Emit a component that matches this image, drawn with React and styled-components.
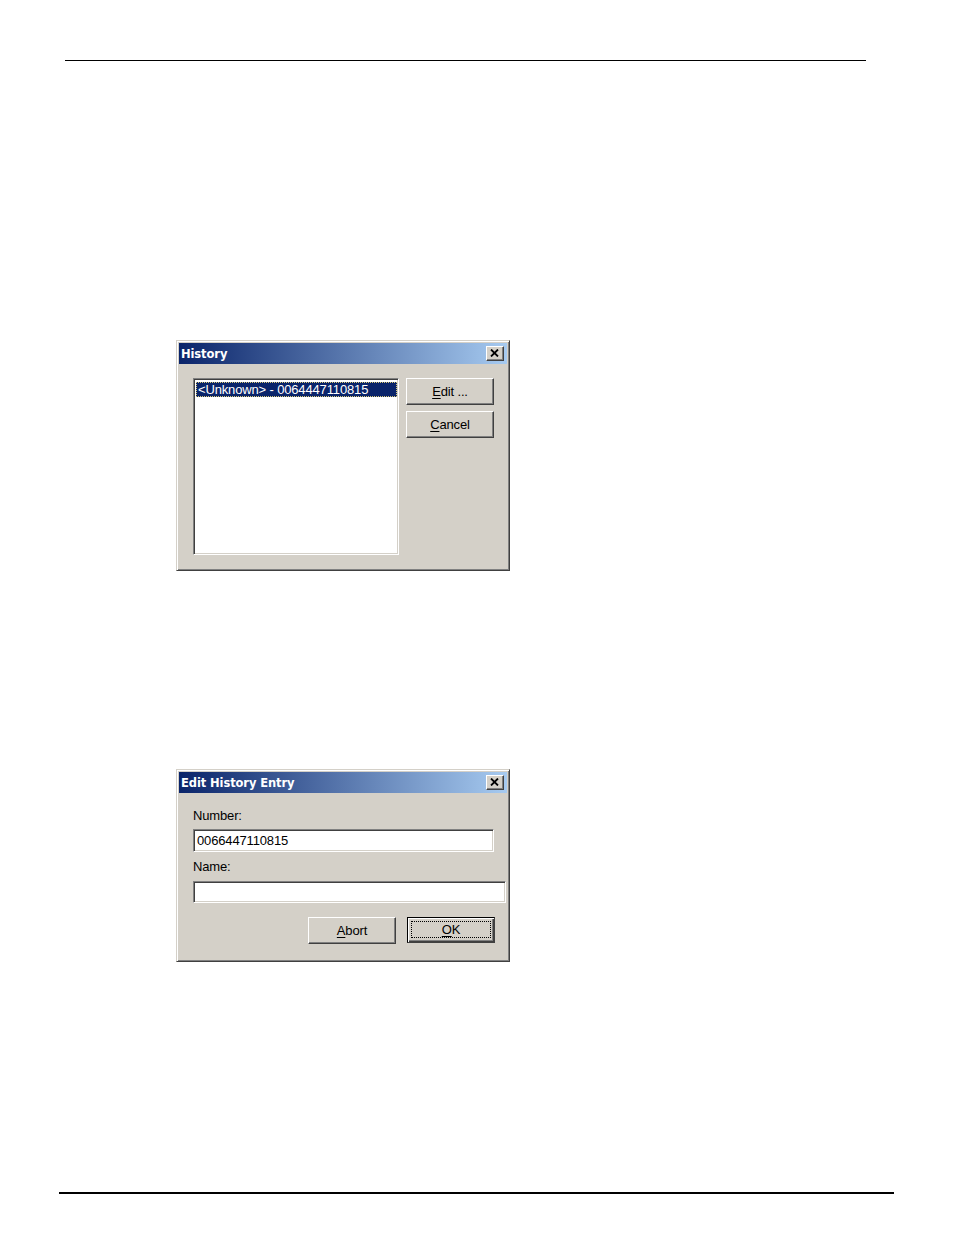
import React from 'react'
import styled, { createGlobalStyle } from 'styled-components'

const GlobalStyle = createGlobalStyle`
  html, body {
    margin: 0;
    padding: 0;
    background: #fff;
  }
  body {
    font-family: "Liberation Sans", Arial, sans-serif;
  }
`

const CloseIcon = () => (
  <svg width="9" height="8" viewBox="0 0 9 8">
    <path d="M1 0.5 L8 7.5 M8 0.5 L1 7.5" stroke="#000" strokeWidth="1.8" />
  </svg>
)

const Window = ({ title, children }) => (
  <Frame>
    <TitleBar>
      <TitleText>{title}</TitleText>
      <CloseButton>
        <CloseIcon />
      </CloseButton>
    </TitleBar>
    {children}
  </Frame>
)

const App = () => (
  <Page>
    <GlobalStyle />
    <TopRule />

    <DialogSlot $top={279}>
      <Window title="History">
        <HistoryBody>
          <ListBox>
            <ListItem $selected>&lt;Unknown&gt; - 0064447110815</ListItem>
          </ListBox>
          <ButtonColumn>
            <Button>
              <u>E</u>dit ...
            </Button>
            <Button>
              <u>C</u>ancel
            </Button>
          </ButtonColumn>
        </HistoryBody>
      </Window>
    </DialogSlot>

    <DialogSlot $top={198}>
      <Window title="Edit History Entry">
        <EntryBody>
          <Label>Number:</Label>
          <TextField $width={301} $height={23}>0066447110815</TextField>
          <Label $gap={7}>Name:</Label>
          <TextField $width={313} $height={22} />
          <ButtonRow>
            <Button>
              <u>A</u>bort
            </Button>
            <Button $default>
              <FocusRing>
                <u>O</u>K
              </FocusRing>
            </Button>
          </ButtonRow>
        </EntryBody>
      </Window>
    </DialogSlot>

    <BottomRule />
  </Page>
)

export default App

const Page = styled.div`
  width: 954px;
  height: 1235px;
  display: flex;
  flex-direction: column;
  overflow: hidden;
`

const TopRule = styled.div`
  margin: 60px 0 0 65px;
  width: 801px;
  height: 1px;
  background: #000;
`

const BottomRule = styled.div`
  margin: 230px 0 0 59px;
  width: 835px;
  height: 2px;
  background: #000;
`

const DialogSlot = styled.div`
  margin: ${(p) => p.$top}px 0 0 176px;
`

const Frame = styled.div`
  width: 334px;
  box-sizing: border-box;
  background: #d4d0c8;
  border-top: 1px solid #d4d0c8;
  border-left: 1px solid #d4d0c8;
  border-right: 1px solid #404040;
  border-bottom: 1px solid #404040;
  box-shadow: inset 1px 1px #fff, inset -1px -1px #808080;
  padding: 2px;
`

const TitleBar = styled.div`
  height: 21px;
  display: flex;
  align-items: center;
  justify-content: space-between;
  padding-left: 2px;
  background: linear-gradient(to right, #0a246a, #a6caf0);
`

const TitleText = styled.span`
  font-family: "DejaVu Sans", Tahoma, sans-serif;
  font-weight: bold;
  font-size: 11.5px;
  color: #fff;
  letter-spacing: -0.1px;
`

const CloseButton = styled.div`
  width: 18px;
  height: 15px;
  margin-right: 3px;
  box-sizing: border-box;
  background: #d4d0c8;
  border-top: 1px solid #fff;
  border-left: 1px solid #fff;
  border-right: 1px solid #404040;
  border-bottom: 1px solid #404040;
  box-shadow: inset -1px -1px #808080;
  display: flex;
  align-items: center;
  justify-content: center;
  padding: 0 1px 1px 0;
`

const HistoryBody = styled.div`
  display: flex;
  gap: 7px;
  padding: 14px 13px 13px 14px;
`

const ListBox = styled.div`
  width: 206px;
  height: 177px;
  box-sizing: border-box;
  background: #fff;
  border-top: 1px solid #808080;
  border-left: 1px solid #808080;
  border-right: 1px solid #fff;
  border-bottom: 1px solid #fff;
  box-shadow: inset 1px 1px #404040, inset -1px -1px #d4d0c8;
  padding: 3px 1px 0 2px;
`

const ListItem = styled.div`
  height: 15px;
  box-sizing: border-box;
  padding-left: 1px;
  font-size: 13px;
  line-height: 13px;
  letter-spacing: -0.15px;
  white-space: nowrap;
  color: ${(p) => (p.$selected ? '#fff' : '#000')};
  background: ${(p) => (p.$selected ? '#0a246a' : 'transparent')};
  border: 1px dotted ${(p) => (p.$selected ? '#d8c878' : 'transparent')};
`

const ButtonColumn = styled.div`
  display: flex;
  flex-direction: column;
  gap: 6px;
`

const Button = styled.div`
  width: 88px;
  height: ${(p) => (p.$default ? 26 : 27)}px;
  box-sizing: border-box;
  display: flex;
  align-items: center;
  justify-content: center;
  background: #d4d0c8;
  font-size: 13px;
  letter-spacing: -0.15px;
  color: #000;
  border-top: 1px solid ${(p) => (p.$default ? '#000' : '#fff')};
  border-left: 1px solid ${(p) => (p.$default ? '#000' : '#fff')};
  border-right: 1px solid #404040;
  border-bottom: 1px solid #404040;
  box-shadow: ${(p) =>
    p.$default
      ? 'inset 1px 1px #fff, inset -1px -1px #404040, inset -2px -2px #808080'
      : 'inset -1px -1px #808080'};
  padding-bottom: 1px;

  u {
    text-decoration-thickness: 1px;
    text-underline-offset: 2px;
  }
`

const FocusRing = styled.span`
  flex: 1;
  align-self: stretch;
  margin: 3px;
  display: flex;
  align-items: center;
  justify-content: center;
  border: 1px dotted #000;
`

const EntryBody = styled.div`
  display: flex;
  flex-direction: column;
  align-items: flex-start;
  padding: 15px 0 15px 14px;
`

const Label = styled.div`
  font-size: 13px;
  line-height: 15px;
  letter-spacing: -0.15px;
  color: #000;
  margin-top: ${(p) => p.$gap || 0}px;
  margin-bottom: ${(p) => (p.$gap ? 7 : 6)}px;
`

const TextField = styled.div`
  width: ${(p) => p.$width}px;
  height: ${(p) => p.$height}px;
  box-sizing: border-box;
  background: #fff;
  border-top: 1px solid #808080;
  border-left: 1px solid #808080;
  border-right: 1px solid #fff;
  border-bottom: 1px solid #fff;
  box-shadow: inset 1px 1px #404040, inset -1px -1px #d4d0c8;
  padding: 3px 0 0 3px;
  font-size: 13px;
  line-height: 15px;
  letter-spacing: -0.15px;
  color: #000;
`

const ButtonRow = styled.div`
  display: flex;
  gap: 11px;
  margin-top: 14px;
  margin-left: 115px;
`
